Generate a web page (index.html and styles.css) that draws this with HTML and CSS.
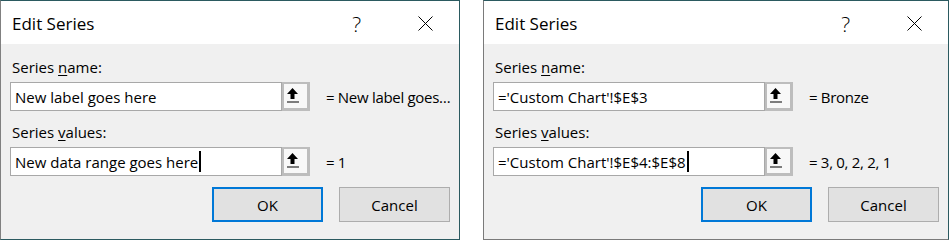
FILE: index.html
```html
<!DOCTYPE html>
<html lang="en">
<head>
  <meta charset="UTF-8" />
  <title>Edit Series</title>
  <link rel="stylesheet" href="styles.css">
</head>
<body>
  <div class="desktop">

    <!-- Dialog with placeholder text -->
    <div class="dialog dialog-left">
      <div class="title-bar">
        <span class="title">Edit Series</span>
        <span class="help">?</span>
        <svg class="close" viewBox="0 0 15 15"><path d="M0.5 0.5 L14.5 14.5 M14.5 0.5 L0.5 14.5" /></svg>
      </div>
      <div class="dialog-body">
        <label class="field-label">Series <u>n</u>ame:</label>
        <div class="field-row">
          <div class="ref-input">New label goes here</div>
          <button type="button" class="collapse-btn" aria-label="Collapse dialog">
            <svg viewBox="0 0 12 15"><path d="M5.5 0 L11 6 H7.5 V11 H3.5 V6 H0 Z" /><rect x="0" y="13.5" width="12" height="1" /></svg>
          </button>
          <span class="ref-value">= New label goes…</span>
        </div>

        <label class="field-label">Series <u>v</u>alues:</label>
        <div class="field-row">
          <div class="ref-input">New data range goes here<span class="caret"></span></div>
          <button type="button" class="collapse-btn" aria-label="Collapse dialog">
            <svg viewBox="0 0 12 15"><path d="M5.5 0 L11 6 H7.5 V11 H3.5 V6 H0 Z" /><rect x="0" y="13.5" width="12" height="1" /></svg>
          </button>
          <span class="ref-value">= 1</span>
        </div>

        <div class="button-row">
          <button type="button" class="dlg-btn default">OK</button>
          <button type="button" class="dlg-btn">Cancel</button>
        </div>
      </div>
    </div>

    <!-- Dialog with real references -->
    <div class="dialog dialog-right">
      <div class="title-bar">
        <span class="title">Edit Series</span>
        <span class="help">?</span>
        <svg class="close" viewBox="0 0 15 15"><path d="M0.5 0.5 L14.5 14.5 M14.5 0.5 L0.5 14.5" /></svg>
      </div>
      <div class="dialog-body">
        <label class="field-label">Series <u>n</u>ame:</label>
        <div class="field-row">
          <div class="ref-input">='Custom Chart'!$E$3</div>
          <button type="button" class="collapse-btn" aria-label="Collapse dialog">
            <svg viewBox="0 0 12 15"><path d="M5.5 0 L11 6 H7.5 V11 H3.5 V6 H0 Z" /><rect x="0" y="13.5" width="12" height="1" /></svg>
          </button>
          <span class="ref-value">= Bronze</span>
        </div>

        <label class="field-label">Series <u>v</u>alues:</label>
        <div class="field-row">
          <div class="ref-input">='Custom Chart'!$E$4:$E$8<span class="caret"></span></div>
          <button type="button" class="collapse-btn" aria-label="Collapse dialog">
            <svg viewBox="0 0 12 15"><path d="M5.5 0 L11 6 H7.5 V11 H3.5 V6 H0 Z" /><rect x="0" y="13.5" width="12" height="1" /></svg>
          </button>
          <span class="ref-value">= 3, 0, 2, 2, 1</span>
        </div>

        <div class="button-row">
          <button type="button" class="dlg-btn default">OK</button>
          <button type="button" class="dlg-btn">Cancel</button>
        </div>
      </div>
    </div>

  </div>
</body>
</html>
```

FILE: styles.css
```css
body {
  margin: 0;
  background: #fff;
  font-family: "Open Sans", sans-serif;
  font-size: 15px;
  color: #000;
}

.desktop {
  display: flex;
  gap: 23px;
  height: 240px;
}

.dialog {
  display: flex;
  flex-direction: column;
  box-sizing: border-box;
  height: 240px;
  border: 1px solid #2b5a60;
  background: #f0f0f0;
}

.dialog-left {
  width: 460px;
  border-left-color: #808080;
}

.dialog-right {
  width: 466px;
  border-left-color: #7a7a7a;
  border-bottom-color: #7a7a7a;
}

/* Title bar */
.title-bar {
  display: flex;
  align-items: center;
  height: 43px;
  box-sizing: border-box;
  padding: 2px 0 0 11px;
  background: #fff;
}

.title {
  flex: 1;
  font-size: 17px;
}

.help {
  font-size: 21px;
  font-weight: 300;
  color: #000;
  margin-right: 57px;
}

.close {
  width: 15px;
  height: 15px;
  margin-right: 26px;
  stroke: #000;
  stroke-width: 1;
  fill: none;
}

/* Body */
.dialog-body {
  flex: 1;
  padding: 13px 9px 0 9px;
}

.field-label {
  display: block;
  line-height: 20px;
  margin: 0 0 5px 2px;
}

.field-label u {
  text-underline-offset: 2px;
}

.field-row {
  display: flex;
  align-items: center;
  margin-bottom: 11px;
}

.ref-input {
  display: flex;
  align-items: center;
  flex-shrink: 0;
  width: 272px;
  height: 29px;
  box-sizing: border-box;
  padding: 0 4px;
  border: 1px solid #a8a8a8;
  background: #fff;
  line-height: 20px;
  white-space: nowrap;
}

.caret {
  display: inline-block;
  width: 2px;
  height: 21px;
  margin-left: 1px;
  background: #000;
}

.collapse-btn {
  display: flex;
  align-items: flex-start;
  justify-content: flex-start;
  flex-shrink: 0;
  width: 28px;
  height: 29px;
  box-sizing: border-box;
  padding: 4px 0 0 3px;
  border: 2px solid #bdbdbd;
  border-right-width: 3px;
  border-bottom-width: 3px;
  background: #f8f8f8;
}

.collapse-btn svg {
  display: block;
  width: 12px;
  height: 15px;
  fill: #000;
}

.ref-value {
  margin-left: 16px;
  line-height: 20px;
  letter-spacing: -0.3px;
  white-space: nowrap;
}

/* OK / Cancel */
.button-row {
  display: flex;
  justify-content: flex-end;
  gap: 16px;
  margin-top: 5px;
}

.dlg-btn {
  width: 111px;
  height: 35px;
  box-sizing: border-box;
  padding: 0;
  font: inherit;
  color: #000;
  background: #e1e1e1;
  border: 1px solid #adadad;
}

.dlg-btn.default {
  border: 2px solid #0078d7;
}
```
